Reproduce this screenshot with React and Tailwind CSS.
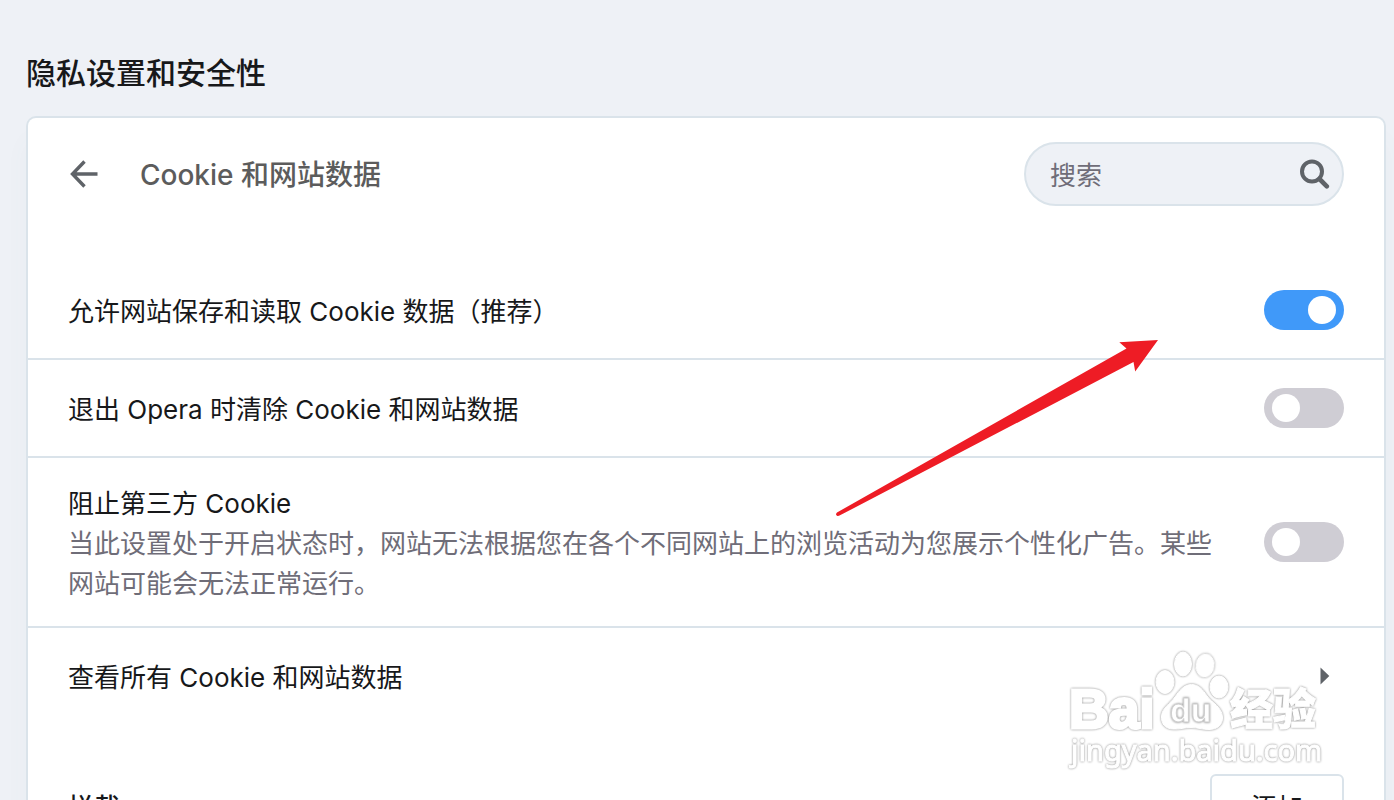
import React, { useState } from 'react';

const DEFAULTS = { allow: true, clearOnExit: false, blockThirdParty: false };

const Toggle = ({ id, checked, onChange }) => (
  <input
    id={id}
    type="checkbox"
    role="switch"
    checked={checked}
    onChange={onChange}
    className="h-10 w-20 shrink-0 cursor-pointer appearance-none rounded-full bg-[#cfcdd4] px-2 py-1.5 before:block before:size-7 before:rounded-full before:bg-white checked:bg-[#4099f9] checked:before:ml-auto"
  />
);

const ToggleRow = ({ id, label, description, checked, onChange }) => (
  <div className="flex min-h-[98px] items-center justify-between gap-10 border-b-2 border-[#dae3ea] px-10">
    <div className="min-w-0 flex-1 pt-[26px] pb-[22px]">
      <label htmlFor={id} className="block cursor-pointer">{label}</label>
      {description && <p className="text-[#6f6d78]">{description}</p>}
    </div>
    <Toggle id={id} checked={checked} onChange={onChange} />
  </div>
);

const BackIcon = () => (
  <svg width="28" height="28" viewBox="0 0 28 28" fill="none" stroke="#5f6368" strokeWidth="3.4">
    <path d="M27.500 14H3M14.500 1.500 2.500 14 14.500 26.500" />
  </svg>
);

const SearchIcon = () => (
  <svg width="30" height="30" viewBox="0 0 30 30" fill="none" stroke="#5f6368" strokeWidth="4">
    <circle cx="12" cy="12.5" r="10" />
    <path d="M19.500 20 26.800 27.300" strokeWidth="4.6" strokeLinecap="round" />
  </svg>
);

const Watermark = () => (
  <svg
    className="pointer-events-none absolute right-[66px] bottom-6 [&>*]:drop-shadow-[0_0_1px_#888]"
    width="264"
    height="132"
    viewBox="1064 644 264 132"
    fill="#fff"
    stroke="#fff"
    strokeWidth="1"
    aria-hidden="true"
  >
    <ellipse cx="1165" cy="682" rx="9" ry="11.5" />
    <ellipse cx="1183" cy="664" rx="8.5" ry="12" />
    <ellipse cx="1205" cy="665.5" rx="9" ry="11.5" transform="rotate(8 1205 665.5)" />
    <ellipse cx="1219" cy="687" rx="9" ry="11" />
    <path d="M1191.500 684.500C1199 684.500 1203 690 1207 696C1212 703 1222 707 1222.500 717C1223 725 1217 729.500 1209 729.500C1202 729.500 1198 727.500 1191 727.500C1184 727.500 1180 729.500 1173 729C1165 728.500 1161 724 1161.500 716C1162 708 1170 704 1175 697C1179 691 1184 684.500 1191.500 684.500Z" />
    <text x="1069" y="728" fontFamily="'Liberation Sans', sans-serif" fontWeight="700" fontSize="55" strokeWidth="3">Bai</text>
    <text x="1170" y="722" fontFamily="'Liberation Sans', sans-serif" fontWeight="700" fontSize="34" stroke="#d0d0d0">du</text>
    <text x="1230" y="725" fontFamily="'Noto Sans CJK SC', sans-serif" fontWeight="900" fontSize="43">经验</text>
    <text x="1071" y="761" fontFamily="'Noto Sans', sans-serif" fontSize="29">jingyan.baidu.com</text>
  </svg>
);

const App = () => {
  const [settings, setSettings] = useState(DEFAULTS);
  const [query, setQuery] = useState('');

  const toggle = (key) => setSettings({ ...settings, [key]: !settings[key] });

  return (
    <div className="relative h-screen overflow-hidden bg-[#eef1f6] pr-2 pl-[26px] font-['Inter','Noto_Sans_CJK_SC',sans-serif] text-[26px] leading-10 text-[#17181a]">
      <h1 className="pt-[53px] pb-[23px] text-[30px] leading-10 font-medium">隐私设置和安全性</h1>

      <section className="rounded-t-[10px] border-2 border-b-0 border-[#dae3ea] bg-white shadow-[0_24px_24px_rgba(90,120,130,0.04)]">
        {/* Header */}
        <div className="flex h-36 items-start justify-between px-10 pt-6">
          <div className="flex h-16 items-center gap-10">
            <button type="button" aria-label="返回" className="flex size-8 cursor-pointer items-center justify-center">
              <BackIcon />
            </button>
            <h2 className="pt-0.5 text-[28px] font-medium text-[#5c5c5c]">Cookie 和网站数据</h2>
          </div>
          <div className="flex h-16 w-80 items-center rounded-full border-2 border-[#dae3ea] bg-[#eef1f6] pr-3 pl-6">
            <input
              type="text"
              aria-label="搜索"
              placeholder="搜索"
              value={query}
              onChange={(e) => setQuery(e.target.value)}
              className="h-12 min-w-0 flex-1 bg-transparent pt-0.5 outline-none placeholder:text-[#6f6d78]"
            />
            <SearchIcon />
          </div>
        </div>

        {/* Cookie settings */}
        <ToggleRow
          id="allow"
          label="允许网站保存和读取 Cookie 数据（推荐）"
          checked={settings.allow}
          onChange={() => toggle('allow')}
        />
        <ToggleRow
          id="clear-on-exit"
          label="退出 Opera 时清除 Cookie 和网站数据"
          checked={settings.clearOnExit}
          onChange={() => toggle('clearOnExit')}
        />
        <ToggleRow
          id="block-third-party"
          label="阻止第三方 Cookie"
          description="当此设置处于开启状态时，网站无法根据您在各个不同网站上的浏览活动为您展示个性化广告。某些网站可能会无法正常运行。"
          checked={settings.blockThirdParty}
          onChange={() => toggle('blockThirdParty')}
        />

        <button type="button" className="flex h-24 w-full cursor-pointer items-center justify-between pr-[54px] pl-10 text-left">
          <span className="pt-1">查看所有 Cookie 和网站数据</span>
          <svg width="10" height="18" viewBox="0 0 10 18" fill="#5f6368">
            <path d="M0.500 0.500 9.300 9 0.500 17.500Z" />
          </svg>
        </button>

        {/* Block list */}
        <div className="flex items-center justify-between px-10 pt-[50px] pb-6">
          <h3 className="pt-1 font-medium">拦截</h3>
          <button type="button" className="h-16 cursor-pointer rounded-md border-2 border-[#dae3ea] bg-white px-[39px] pt-1">
            添加
          </button>
        </div>
      </section>

      <svg
        className="pointer-events-none absolute top-[338px] left-[834px]"
        width="328"
        height="182"
        viewBox="834 338 328 182"
        fill="#ee1c25"
        aria-hidden="true"
      >
        <path d="M1158 340 1119.300 342.200 1126.500 348.500 837 512.500Q835 514.500 837 515.700Q838 516.500 839.500 515.600L1133.500 362 1135.200 371.500Z" />
      </svg>
      <Watermark />
    </div>
  );
};

export default App;
